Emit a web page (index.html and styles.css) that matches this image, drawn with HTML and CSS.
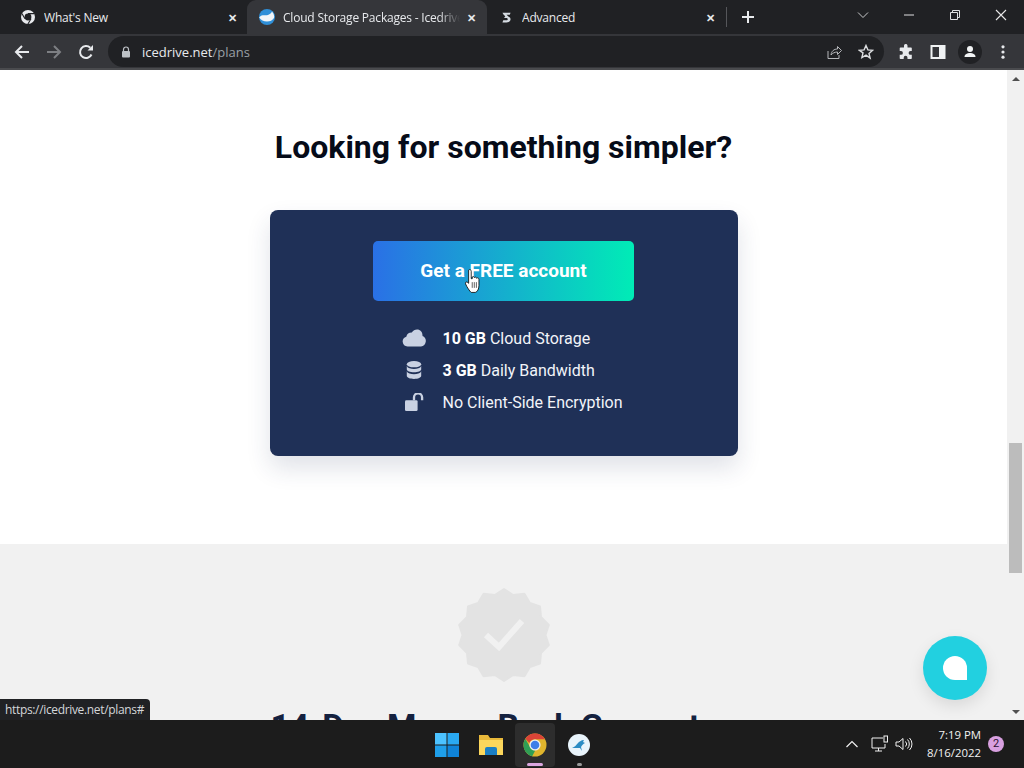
FILE: index.html
```html
<!DOCTYPE html>
<html>
  <head>
    <meta charset="utf-8">
    <title>Cloud Storage Packages - Icedrive</title>
    <link rel="stylesheet" href="styles.css">
  </head>
  <body>
    <div class="tabstrip">
      <div class="tab tab-first">
        <svg class="favicon" viewBox="0 0 16 16"><circle cx="8" cy="8" r="7" fill="#e8eaed"/><circle cx="8" cy="8" r="3.4" fill="#202124"/><path d="M8 4.6h6.4M5 9.8 1.9 4.4M11 9.8l-3.2 5.4" stroke="#202124" stroke-width="1.1"/></svg>
        <span class="tab-title">What's New</span>
        <span class="tab-close">&#10005;</span>
      </div>
      <div class="tab tab-active">
        <svg class="favicon" viewBox="0 0 16 16"><circle cx="8" cy="8" r="8" fill="#2f8fd8"/><path d="M0.2 8.500C3 5 6 7 9 6c2-.7 3.500-2 4-3.500C15 5 15.500 7 15 9c-1.500 2.500-4 3.500-7 3.500-3.500 0-6-1.500-7.800-4z" fill="#f1f5f8"/></svg>
        <span class="tab-title tab-fade">Cloud Storage Packages - Icedrive</span>
        <span class="tab-close">&#10005;</span>
      </div>
      <div class="tab tab-third">
        <svg class="favicon favicon-small" viewBox="0 0 16 16"><path d="M3 2h10l-1 2.500H8l3 3C14 8 14 14 8 14H3l1-2.500h4c2 0 2-3 0-3H5L6.500 6.500 4.500 4.500z" fill="#d5dbe2"/></svg>
        <span class="tab-title">Advanced</span>
        <span class="tab-close">&#10005;</span>
      </div>
      <span class="tab-sep"></span>
      <svg class="newtab" viewBox="0 0 14 14"><path d="M7 1v12M1 7h12" stroke="#e8eaed" stroke-width="2"/></svg>
      <div class="win-buttons">
        <svg class="win-icon" viewBox="0 0 12 12"><path d="M1 3.500l5 5 5-5" fill="none" stroke="#c8c9cb"/></svg>
        <svg class="win-icon" viewBox="0 0 12 12"><path d="M1 6h10" stroke="#dfe0e1"/></svg>
        <svg class="win-icon" viewBox="0 0 12 12"><path d="M1.500 3.500h7v7h-7zM3.500 3.500v-2h7v7h-2" fill="none" stroke="#dfe0e1"/></svg>
        <svg class="win-icon" viewBox="0 0 12 12"><path d="M1 1l10 10M11 1 1 11" stroke="#e8e8e8" stroke-width="1.100"/></svg>
      </div>
    </div>

    <div class="toolbar">
      <svg class="nav-icon" viewBox="0 0 16 16"><path d="M15 8H2M8 2 2 8l6 6" fill="none" stroke="#e8eaed" stroke-width="2"/></svg>
      <svg class="nav-icon" viewBox="0 0 16 16"><path d="M1 8h13M8 2l6 6-6 6" fill="none" stroke="#7d7f83" stroke-width="2"/></svg>
      <svg class="nav-icon" viewBox="0 0 16 16"><path d="M13.500 10.500A6 6 0 1 1 12.300 3.800" fill="none" stroke="#e8eaed" stroke-width="2"/><path d="M9.500 6.500H15V1z" fill="#e8eaed"/></svg>
      <div class="omnibox">
        <svg class="lock" viewBox="0 0 10 12"><path d="M2.500 5V3.500a2.500 2.500 0 0 1 5 0V5" fill="none" stroke="#bdc1c6" stroke-width="1.200"/><rect x="1" y="5" width="8" height="6.500" rx="1" fill="#bdc1c6"/></svg>
        <span class="url">icedrive.net<span class="url-path">/plans</span></span>
        <svg class="omni-icon" viewBox="0 0 16 16"><path d="M2 7v7.500h11V11M5 11c.5-4 3-6 6.500-6V2.500L15.500 6.500 11.500 10.500V8C9 8 6.500 9 5 11z" fill="none" stroke="#b5b7ba"/></svg>
        <svg class="omni-icon" viewBox="0 0 16 16"><path d="M8 1.500l1.900 4.400 4.700.4-3.600 3.100 1.100 4.700L8 11.100l-4.100 2.500 1.100-4.700L1.400 6.300l4.700-.4z" fill="none" stroke="#dcdee0" stroke-width="1.400"/></svg>
      </div>
      <svg class="tool-icon" viewBox="0 0 16 16"><path d="M6 1.500a1.800 1.800 0 0 1 3.500 0V3.500H13a.8.8 0 0 1 .8.8V7h-1.300a1.900 1.900 0 0 0 0 3.800h1.300v3.400a.8.8 0 0 1-.8.8H9.500v-1.300a1.900 1.900 0 0 0-3.800 0V15H2.500a.8.800 0 0 1-.8-.8V10.800H3a1.900 1.900 0 0 0 0-3.800H1.700V4.300a.8.8 0 0 1 .8-.8H6z" fill="#e8eaed"/></svg>
      <svg class="tool-icon" viewBox="0 0 16 16"><rect x="1.500" y="2" width="13" height="12" fill="none" stroke="#f1f3f4" stroke-width="2"/><rect x="9" y="2" width="6" height="12" fill="#f1f3f4"/></svg>
      <span class="avatar"><svg viewBox="0 0 16 16"><circle cx="8" cy="5" r="3" fill="#f1f3f4"/><path d="M2.500 13c0-3 3-4 5.500-4s5.500 1 5.500 4z" fill="#f1f3f4"/></svg></span>
      <svg class="tool-icon tool-menu" viewBox="0 0 16 16"><circle cx="8" cy="2.800" r="1.600" fill="#e8eaed"/><circle cx="8" cy="8" r="1.600" fill="#e8eaed"/><circle cx="8" cy="13.200" r="1.600" fill="#e8eaed"/></svg>
    </div>

    <div class="viewport">
      <main class="page">
        <section class="simple">
          <h1 class="simple-title">Looking for something simpler?</h1>
          <div class="plan-card">
            <a class="cta" href="#">Get a FREE account</a>
            <ul class="features">
              <li class="feature">
                <svg class="feature-icon" viewBox="0 0 24 18"><path d="M5.500 17.500a5 5 0 0 1-1.200-9.800 5.500 5.500 0 0 1 5.500-4.200C11 1.500 13 .500 15 .500c3.500 0 5.700 2.700 5.500 6.500a5.500 5.500 0 0 1-1.500 10.500z" fill="#c9d1e2"/></svg>
                <span><b>10 GB</b> Cloud Storage</span>
              </li>
              <li class="feature">
                <svg class="feature-icon" viewBox="0 0 24 20"><ellipse cx="12" cy="3.500" rx="8" ry="3.500" fill="#c9d1e2"/><path d="M4 5.500c1 2.500 4.500 3.300 8 3.300s7-.800 8-3.300v3.700c0 2-3.500 3.300-8 3.300s-8-1.300-8-3.300z" fill="#c9d1e2"/><path d="M4 11.500c1 2.500 4.500 3.300 8 3.300s7-.800 8-3.300v5c0 2-3.500 3.500-8 3.500s-8-1.500-8-3.500z" fill="#c9d1e2"/></svg>
                <span><b>3 GB</b> Daily Bandwidth</span>
              </li>
              <li class="feature">
                <svg class="feature-icon" viewBox="0 0 24 20"><rect x="2" y="8" width="14" height="12" rx="1.500" fill="#c9d1e2"/><path d="M12 8V5a4.500 4.500 0 0 1 9 0v3" fill="none" stroke="#c9d1e2" stroke-width="2.600"/></svg>
                <span>No Client-Side Encryption</span>
              </li>
            </ul>
          </div>
        </section>
        <section class="guarantee">
          <svg class="badge" viewBox="0 0 96 96">
            <polygon points="48,2 57.200,8 68.400,6.700 73.900,16 84,19.500 85,30 92.800,38 89.500,48 92.800,58 85,66 84,76.500 73.900,80 68.400,89.300 57.200,88 48,94 38.800,88 27.600,89.300 22.100,80 12,76.500 11,66 3.200,58 6.500,48 3.200,38 11,30 12,19.500 22.100,16 27.600,6.700 38.800,8" fill="#e3e3e3" stroke="#e3e3e3" stroke-width="2" stroke-linejoin="round"/>
            <path d="M30 48l13 12 23-26" fill="none" stroke="#f1f1f1" stroke-width="6"/>
          </svg>
          <h2 class="guarantee-title">14-Day Money Back Guarantee</h2>
        </section>
      </main>
      <div class="scrollbar">
        <span class="arrow arrow-up"></span>
        <div class="track"><span class="thumb"></span></div>
        <span class="arrow arrow-down"></span>
      </div>
      <svg class="cursor" viewBox="1 0.500 14.500 21" preserveAspectRatio="none"><path d="M4.500 1.500c1-1 2.500-.5 2.500 1V9l1 0V7.500c1-1 2 0 2 .5 1-1 2 0 2 .5 1-.8 2.500 0 2.500 1V15c0 3-1.500 5.500-3.500 6H7c-1.500-1-4-4.500-5.500-7.500-.5-1.500 1-2.500 3-.5z" fill="#fff" stroke="#111" stroke-width=".8"/><path d="M8 12v5M10 12v5M12 12v5" stroke="#111" stroke-width=".6"/></svg>
      <div class="status-bubble">https://icedrive.net/plans#</div>
      <div class="chat-button"><span class="chat-glyph"></span></div>
    </div>

    <footer class="taskbar">
      <div class="task-icons">
        <span class="task-item">
          <svg class="task-icon" viewBox="0 0 24 24"><rect x="0" y="0" width="11.500" height="11.500" fill="#4cc2ff"/><rect x="12.500" y="0" width="11.500" height="11.500" fill="#2aa9f2"/><rect x="0" y="12.500" width="11.500" height="11.500" fill="#1f9fea"/><rect x="12.500" y="12.500" width="11.500" height="11.500" fill="#0f83d8"/></svg>
        </span>
        <span class="task-item">
          <svg class="task-icon" viewBox="0 0 24 24"><path d="M0 2h9l2 3h13v17H0z" fill="#e9b93a"/><path d="M0 7h24v15H0z" fill="#fcd75c"/><path d="M6 22v-6a2 2 0 0 1 2-2h8a2 2 0 0 1 2 2v6z" fill="#1b7fc4"/></svg>
        </span>
        <span class="task-item task-item-active">
          <svg class="task-icon" viewBox="0 0 24 24"><circle cx="12" cy="12" r="11.500" fill="#e0b52d"/><path d="M12 .5a11.500 11.500 0 0 1 10 5.700H12a6 6 0 0 0-5.600 3.700L2.300 5.800A11.500 11.500 0 0 1 12 .5z" fill="#db4437"/><path d="M.5 12a11.500 11.500 0 0 1 1.800-6.200l5 8.700a5.800 5.800 0 0 0 4.900 3l-3 5.800A11.500 11.500 0 0 1 .5 12z" fill="#2f9e55"/><circle cx="12" cy="12" r="5.600" fill="#f1f1f1"/><circle cx="12" cy="12" r="4.300" fill="#3f7fe8"/></svg>
          <span class="task-pip task-pip-wide"></span>
        </span>
        <span class="task-item">
          <svg class="task-icon task-icon-round" viewBox="0 0 24 24"><circle cx="12" cy="12" r="11" fill="#e9f4fb"/><path d="M5 15c3-1 4-3 6-5 1-1 3-3 6-3l-1 2 2 1c-2 1-3 2-4 4l1 4-2-3c-2 0-5 0-8 0z" fill="#2b8cc4"/></svg>
          <span class="task-pip"></span>
        </span>
      </div>
      <div class="tray">
        <svg class="tray-icon tray-chevron" viewBox="0 0 14 14"><path d="M1.500 10 7 4.500l5.500 5.500" fill="none" stroke="#f1f1f1" stroke-width="1.200"/></svg>
        <svg class="tray-icon tray-net" viewBox="0 0 18 18"><path d="M12 3H1v10h13V9M4 16h7M7.500 13v3" fill="none" stroke="#f1f1f1"/><rect x="13" y="1" width="3.500" height="6" fill="none" stroke="#f1f1f1"/></svg>
        <svg class="tray-icon" viewBox="0 0 18 18"><path d="M1 7v4h3l4 3.500v-11L4 7z" fill="none" stroke="#f1f1f1"/><path d="M10.500 6.500a3.500 3.500 0 0 1 0 5M12.500 4.500a6.500 6.500 0 0 1 0 9M14.500 3a8.500 8.500 0 0 1 0 12" fill="none" stroke="#f1f1f1"/></svg>
        <div class="clock"><div>7:19 PM</div><div>8/16/2022</div></div>
        <span class="notif">2</span>
      </div>
    </footer>
  </body>
</html>
```

FILE: styles.css
```css
* { box-sizing: border-box; }
html, body { height: 100%; }
body {
  margin: 0;
  overflow: hidden;
  display: flex;
  flex-direction: column;
  font-family: Roboto, "Liberation Sans", sans-serif;
  background: #fff;
}

/* browser chrome */
.tabstrip {
  height: 34px;
  flex: none;
  display: flex;
  align-items: flex-end;
  background: #202124;
  font-family: "Open Sans", "Noto Sans", sans-serif;
  color: #e8eaed;
  font-size: 12px;
}
.tab {
  height: 34px;
  width: 240px;
  flex: none;
  display: flex;
  align-items: center;
  padding: 0 8px 0 12px;
  letter-spacing: -0.2px;
}
.tab-first { width: 247px; padding: 0 7px 0 20px; }
.tab-active {
  background: #35363a;
  border-radius: 9px 9px 0 0;
  width: 240px;
}
.tab-third { width: 239px; padding-left: 13px; }
.favicon { width: 16px; height: 16px; flex: none; margin-right: 8px; }
.favicon-small { width: 13px; height: 13px; margin-right: 9px; }
.tab-title { flex: 1; white-space: nowrap; overflow: hidden; min-width: 0; }
.tab-fade {
  -webkit-mask-image: linear-gradient(to right, #000 88%, transparent);
  mask-image: linear-gradient(to right, #000 88%, transparent);
}
.tab-close { font-size: 11px; font-weight: 700; width: 16px; text-align: center; flex: none; margin-left: 3px; }
.tab-sep { width: 1px; height: 20px; background: #55565a; margin: 0 0 7px 0; flex: none; }
.newtab { width: 14px; height: 14px; margin: 0 0 10px 14px; flex: none; }
.win-buttons {
  margin-left: auto;
  display: flex;
  align-self: flex-start;
  align-items: center;
  height: 29px;
  padding-right: 17px;
  gap: 34px;
}
.win-icon { width: 12px; height: 12px; flex: none; }

.toolbar {
  height: 36px;
  flex: none;
  display: flex;
  align-items: center;
  background: #35363a;
  border-bottom: 2px solid #4a4b4e;
  padding: 1px 14px 0;
}
.nav-icon { width: 16px; height: 16px; margin-right: 16px; flex: none; }
.omnibox {
  width: 776px;
  height: 31px;
  margin-left: -2px;
  flex: none;
  display: flex;
  align-items: center;
  background: #202124;
  border-radius: 16px;
  padding: 0 10px 0 13px;
  font-family: "Open Sans", "Noto Sans", sans-serif;
  font-size: 13px;
}
.lock { width: 10px; height: 12px; margin-right: 11px; flex: none; }
.url { flex: 1; color: #e8eaed; }
.url-path { color: #9aa0a6; }
.omni-icon { width: 16px; height: 16px; margin-left: 16px; flex: none; }
.tool-icon { width: 16px; height: 16px; margin-left: 16px; flex: none; }
.omnibox + .tool-icon { margin-left: 14px; }
.avatar {
  width: 24px;
  height: 24px;
  margin-left: 12px;
  padding: 4px;
  border-radius: 50%;
  background: #202124;
  flex: none;
}
.avatar svg { display: block; width: 16px; height: 16px; }
.tool-menu { margin-left: 13px; }

/* page */
.viewport {
  flex: 1;
  min-height: 0;
  position: relative;
  display: flex;
  overflow: hidden;
}
.page { flex: 1; min-width: 0; }
.simple {
  height: 474px;
  background: #fff;
  padding-top: 57px;
  display: flex;
  flex-direction: column;
  align-items: center;
}
.simple-title {
  margin: 0;
  font-size: 32px;
  line-height: 40px;
  font-weight: 700;
  color: #060b18;
}
.plan-card {
  width: 468px;
  height: 246px;
  margin-top: 43px;
  padding-top: 31px;
  background: #1f3057;
  border-radius: 8px;
  box-shadow: 0 12px 24px rgba(32, 49, 90, 0.14);
  display: flex;
  flex-direction: column;
  align-items: center;
}
.cta {
  width: 261px;
  height: 60px;
  padding-bottom: 2px;
  display: flex;
  align-items: center;
  justify-content: center;
  border-radius: 5px;
  background: linear-gradient(90deg, #2a70e6, #00ecb6);
  color: #fff;
  font-size: 19px;
  font-weight: 700;
  text-decoration: none;
}
.features {
  list-style: none;
  margin: 21px 0 0 16px;
  padding: 0;
  width: 220px;
}
.feature {
  height: 32px;
  display: flex;
  align-items: center;
  color: #f2f4f9;
  font-size: 16px;
  white-space: nowrap;
}
.feature b { color: #fff; }
.feature-icon { width: 24px; height: 18px; margin-right: 17px; flex: none; }

.guarantee {
  height: 220px;
  background: #f1f1f1;
  padding-top: 43px;
  display: flex;
  flex-direction: column;
  align-items: center;
}
.badge { width: 96px; height: 96px; flex: none; }
.guarantee-title {
  margin: 24px 0 0;
  font-size: 2.1rem;
  line-height: 40px;
  font-weight: 700;
  color: #14213f;
  white-space: nowrap;
}

.scrollbar {
  width: 17px;
  flex: none;
  display: flex;
  flex-direction: column;
  background: #f1f1f1;
}
.arrow {
  height: 17px;
  flex: none;
  display: flex;
  align-items: center;
  justify-content: center;
}
.arrow::before {
  content: "";
  border-left: 4px solid transparent;
  border-right: 4px solid transparent;
}
.arrow-up::before { border-bottom: 4px solid #505050; }
.arrow-down::before { border-top: 4px solid #505050; }
.track { flex: 1; padding-top: 356px; }
.thumb { display: block; height: 130px; margin: 0 2px; background: #bcbcbc; }

/* things lying over the page */
.cursor {
  position: absolute;
  left: 465px;
  top: 199px;
  width: 15px;
  height: 24px;
}
.status-bubble {
  position: absolute;
  left: 0;
  bottom: 0;
  height: 21px;
  padding: 0 6px 0 5px;
  line-height: 21px;
  background: #202124;
  border-radius: 0 4px 0 0;
  color: #d5d7da;
  font-family: "Open Sans", "Noto Sans", sans-serif;
  font-size: 12px;
  letter-spacing: -0.34px;
}
.chat-button {
  position: absolute;
  left: 923px;
  top: 566px;
  width: 64px;
  height: 64px;
  border-radius: 50%;
  background: #22d0e0;
  box-shadow: 0 6px 16px rgba(0, 0, 0, 0.1);
  display: flex;
  align-items: center;
  justify-content: center;
}
.chat-glyph {
  width: 24px;
  height: 24px;
  background: #fff;
  border-radius: 50% 50% 0 50%;
}

/* windows taskbar */
.taskbar {
  height: 48px;
  flex: none;
  position: relative;
  display: flex;
  align-items: center;
  justify-content: flex-end;
  background: #1c1c1c;
  color: #f1f1f1;
}
.task-icons {
  position: absolute;
  left: 427px;
  top: 0;
  height: 48px;
  display: flex;
  gap: 4px;
}
.task-item {
  position: relative;
  width: 40px;
  height: 44px;
  margin-top: 3px;
  display: flex;
  align-items: center;
  justify-content: center;
  border-radius: 4px;
}
.task-item-active { background: #2d2d2d; }
.task-icon { width: 24px; height: 24px; }
.task-pip {
  position: absolute;
  bottom: 1px;
  left: 18px;
  width: 5px;
  height: 3px;
  border-radius: 2px;
  background: #9a9a9a;
}
.task-pip-wide { left: 12px; width: 16px; background: #dba7e0; }
.tray {
  display: flex;
  align-items: center;
  padding-right: 20px;
}
.tray-icon { width: 18px; height: 18px; flex: none; margin-right: 6px; }
.tray-chevron { width: 14px; height: 14px; margin-right: 12px; }
.clock {
  margin-left: 8px;
  text-align: right;
  font-family: "Open Sans", "Noto Sans", sans-serif;
  font-size: 11.4px;
  line-height: 18px;
}
.notif {
  width: 16px;
  height: 16px;
  margin-left: 7px;
  border-radius: 50%;
  background: #d8a0e0;
  color: #2a1030;
  font-size: 11px;
  line-height: 16px;
  text-align: center;
}
```
